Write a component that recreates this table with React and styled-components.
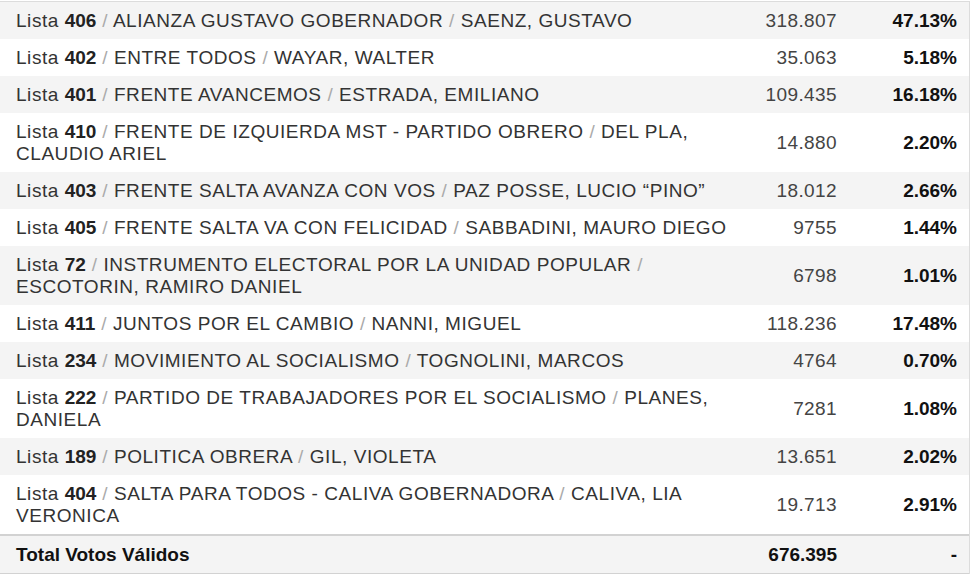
import React from "react";
import styled, { createGlobalStyle } from "styled-components";

const Global = createGlobalStyle`
  html, body { margin: 0; padding: 0; background: #fff; }
  body { padding-top: 1px; font-family: "Liberation Sans", Arial, sans-serif; }
`;

const Table = styled.div`
  width: 970px;
  box-sizing: border-box;
  border-top: 1px solid #dcdcdc;
  border-right: 1px solid #dcdcdc;
  display: grid;
  grid-template-columns: 1fr 100px 120px;
  grid-auto-rows: auto;
  font-size: 19px;
  line-height: 22px;
  letter-spacing: 0.55px;
  color: #333;
`;

const Row = styled.div`
  display: contents;
  & > div {
    background: ${(p) => (p.$shade ? "#f4f4f4" : "#ffffff")};
  }
`;

const Name = styled.div`
  padding: 7.5px 12px 7.5px 16px;
`;

const Num = styled.div`
  padding: 7.5px 12px 7.5px 0;
  display: flex;
  align-items: center;
  justify-content: flex-end;
  color: #444;
  letter-spacing: 0.4px;
`;

const Pct = styled(Num)`
  font-weight: bold;
  color: #111;
  letter-spacing: 0;
`;

const Slash = styled.span`
  color: #aaa;
`;

const Strong = styled.b`
  color: #222;
  letter-spacing: 0;
`;

const TotalCell = styled.div`
  background: #f4f4f4;
  border-top: 2px solid #d2d2d2;
  border-bottom: 1px solid #d2d2d2;
  padding: 7.5px 12px 7.5px 16px;
  font-weight: bold;
  color: #111;
  letter-spacing: 0;
  display: flex;
  align-items: center;
  justify-content: ${(p) => (p.$right ? "flex-end" : "flex-start")};
  ${(p) => (p.$right ? "padding-left: 0;" : "")}
`;

const data = [
  ["406", "ALIANZA GUSTAVO GOBERNADOR", "SAENZ, GUSTAVO", "318.807", "47.13%"],
  ["402", "ENTRE TODOS", "WAYAR, WALTER", "35.063", "5.18%"],
  ["401", "FRENTE AVANCEMOS", "ESTRADA, EMILIANO", "109.435", "16.18%"],
  ["410", "FRENTE DE IZQUIERDA MST - PARTIDO OBRERO", "DEL PLA, CLAUDIO ARIEL", "14.880", "2.20%"],
  ["403", "FRENTE SALTA AVANZA CON VOS", "PAZ POSSE, LUCIO “PINO”", "18.012", "2.66%"],
  ["405", "FRENTE SALTA VA CON FELICIDAD", "SABBADINI, MAURO DIEGO", "9755", "1.44%"],
  ["72", "INSTRUMENTO ELECTORAL POR LA UNIDAD POPULAR", "ESCOTORIN, RAMIRO DANIEL", "6798", "1.01%"],
  ["411", "JUNTOS POR EL CAMBIO", "NANNI, MIGUEL", "118.236", "17.48%"],
  ["234", "MOVIMIENTO AL SOCIALISMO", "TOGNOLINI, MARCOS", "4764", "0.70%"],
  ["222", "PARTIDO DE TRABAJADORES POR EL SOCIALISMO", "PLANES, DANIELA", "7281", "1.08%"],
  ["189", "POLITICA OBRERA", "GIL, VIOLETA", "13.651", "2.02%"],
  ["404", "SALTA PARA TODOS - CALIVA GOBERNADORA", "CALIVA, LIA VERONICA", "19.713", "2.91%"],
];

export default function App() {
  return (
    <>
      <Global />
      <Table>
        {data.map(([n, party, cand, votes, pct], i) => (
          <Row key={n} $shade={i % 2 === 0}>
            <Name>
              Lista <Strong>{n}</Strong> <Slash>/</Slash> {party} <Slash>/</Slash> {cand}
            </Name>
            <Num>{votes}</Num>
            <Pct>{pct}</Pct>
          </Row>
        ))}
        <TotalCell>Total Votos Válidos</TotalCell>
        <TotalCell $right>676.395</TotalCell>
        <TotalCell $right>-</TotalCell>
      </Table>
    </>
  );
}
